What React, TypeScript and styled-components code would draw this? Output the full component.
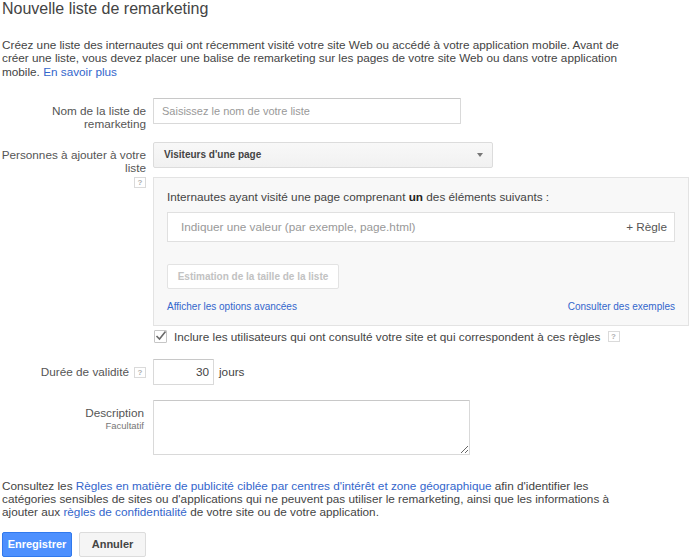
import React from 'react'
import styled, { createGlobalStyle } from 'styled-components'

const GlobalStyle = createGlobalStyle`
  body {
    margin: 0;
    background: #fff;
    font-family: 'Liberation Sans', Arial, sans-serif;
    color: #444;
  }
  * { box-sizing: border-box; }
`

// the screenshot's body text sits a little under 12px
const TEXT = '11.75px'

const App = () => {
  return (
    <Page>
      <GlobalStyle />
      <Title>Nouvelle liste de remarketing</Title>
      <Paragraph $top={20}>
        Créez une liste des internautes qui ont récemment visité votre site Web
        ou accédé à votre application mobile. Avant de créer une liste, vous
        devez placer une balise de remarketing sur les pages de votre site Web
        ou dans votre application mobile. <Link href="#">En savoir plus</Link>
      </Paragraph>

      <Row $top={20}>
        <Label>Nom de la liste de remarketing</Label>
        <div>
          <TextInput $width={308} placeholder="Saisissez le nom de votre liste" />
        </div>
      </Row>

      <Row $top={11}>
        <Label>
          Personnes à ajouter à votre liste
          <HelpLine>
            <Help>?</Help>
          </HelpLine>
        </Label>
        <div>
          <Select>
            Visiteurs d&apos;une page
            <Arrow />
          </Select>
          <Panel>
            <PanelHeading>
              Internautes ayant visité une page comprenant <b>un</b> des
              éléments suivants :
            </PanelHeading>
            <RuleBox>
              <RuleInput placeholder="Indiquer une valeur (par exemple, page.html)" />
              <RuleAdd>+ Règle</RuleAdd>
            </RuleBox>
            <EstimateButton disabled>Estimation de la taille de la liste</EstimateButton>
            <PanelLinks>
              <Link href="#">Afficher les options avancées</Link>
              <Link href="#">Consulter des exemples</Link>
            </PanelLinks>
          </Panel>
          <CheckRow>
            <CheckBox>
              <svg width="14" height="14" viewBox="0 0 14 14">
                <polyline
                  points="2.5,7 5.5,10 11.5,2.5"
                  fill="none"
                  stroke="#6a6a6a"
                  strokeWidth="1.6"
                />
              </svg>
            </CheckBox>
            Inclure les utilisateurs qui ont consulté votre site et qui
            correspondent à ces règles
            <Help $gap={7}>?</Help>
          </CheckRow>
        </div>
      </Row>

      <Row $top={15}>
        <Label>
          Durée de validité
          <Help $gap={5}>?</Help>
        </Label>
        <Duration>
          <TextInput $width={61} $alignRight defaultValue="30" />
          <span>jours</span>
        </Duration>
      </Row>

      <Row $top={15}>
        <Label $pad={2}>
          Description
          <SubLabel>Facultatif</SubLabel>
        </Label>
        <div>
          <TextArea />
        </div>
      </Row>

      <Paragraph $top={24}>
        Consultez les{' '}
        <Link href="#">
          Règles en matière de publicité ciblée par centres d&apos;intérêt et
          zone géographique
        </Link>{' '}
        afin d&apos;identifier les catégories sensibles de sites ou
        d&apos;applications qui ne peuvent pas utiliser le remarketing, ainsi
        que les informations à ajouter aux{' '}
        <Link href="#">règles de confidentialité</Link> de votre site ou de
        votre application.
      </Paragraph>

      <Actions>
        <Button $primary $width={70}>Enregistrer</Button>
        <Button $width={67}>Annuler</Button>
      </Actions>
    </Page>
  )
}

export default App

const Page = styled.div`
  width: 700px;
  height: 560px;
  overflow: hidden;
  padding-left: 2px;
`

const Title = styled.h1`
  margin: 0;
  font-size: 16px;
  line-height: 18px;
  font-weight: normal;
  color: #444;
`

const Paragraph = styled.p<{ $top: number }>`
  margin: ${p => p.$top}px 0 0;
  width: 635px;
  font-size: ${TEXT};
  line-height: 13.3px;
  color: #444;
`

const Link = styled.a`
  color: #3366cc;
  text-decoration: none;
`

const Row = styled.div<{ $top: number }>`
  display: grid;
  grid-template-columns: 144px 1fr;
  column-gap: 7px;
  align-items: start;
  margin-top: ${p => p.$top}px;
`

/* a few px of slack on the left so the longest label keeps to one line */
const Label = styled.div<{ $pad?: number }>`
  margin-left: -4px;
  text-align: right;
  padding-top: 6px;
  padding-right: ${p => p.$pad || 0}px;
  font-size: ${TEXT};
  line-height: 13.5px;
  color: #555;
`

const SubLabel = styled.div`
  font-size: 9.5px;
  line-height: 13px;
  color: #777;
`

const HelpLine = styled.div`
  margin-top: 1px;
  line-height: 11px;
`

const Help = styled.span<{ $gap?: number }>`
  display: inline-block;
  vertical-align: middle;
  margin-left: ${p => p.$gap || 0}px;
  width: 12px;
  height: 11px;
  border: 1px solid #dadada;
  font-size: 8px;
  line-height: 9px;
  text-align: center;
  color: #b0b0b0;
  font-weight: bold;
`

const TextInput = styled.input<{ $width: number; $alignRight?: boolean }>`
  width: ${p => p.$width}px;
  height: 26px;
  margin: 0;
  padding: 0 ${p => (p.$alignRight ? 4 : 8)}px 0 8px;
  border: 1px solid #d9d9d9;
  border-top-color: #c8c8c8;
  border-radius: 1px;
  font-family: inherit;
  font-size: ${p => (p.$alignRight ? TEXT : '11px')};
  color: #444;
  text-align: ${p => (p.$alignRight ? 'right' : 'left')};
  outline: none;

  &::placeholder {
    color: #999;
  }
`

const Select = styled.div`
  width: 340px;
  height: 26px;
  display: flex;
  align-items: center;
  justify-content: space-between;
  padding: 0 9px 0 10px;
  border: 1px solid #dcdcdc;
  border-radius: 2px;
  background: linear-gradient(#f8f8f8, #f1f1f1);
  font-size: 10px;
  font-weight: bold;
  color: #444;
`

const Arrow = styled.span`
  width: 0;
  height: 0;
  border-left: 3.5px solid transparent;
  border-right: 3.5px solid transparent;
  border-top: 4px solid #777;
`

const Panel = styled.div`
  margin-top: 9px;
  width: 536px;
  padding: 12px 13px 11px 13px;
  border: 1px solid #e3e3e3;
  background: #f8f8f8;
`

const PanelHeading = styled.div`
  font-size: ${TEXT};
  line-height: 14px;
  color: #444;

  b {
    color: #222;
  }
`

const RuleBox = styled.div`
  margin-top: 8px;
  height: 30px;
  display: flex;
  align-items: center;
  padding: 0 7px 0 13px;
  border: 1px solid #e0e0e0;
  background: #fff;
`

const RuleInput = styled.input`
  flex: 1;
  border: none;
  outline: none;
  padding: 0;
  font-family: inherit;
  font-size: ${TEXT};
  background: transparent;

  &::placeholder {
    color: #999;
  }
`

const RuleAdd = styled.span`
  font-size: ${TEXT};
  color: #555;
`

const EstimateButton = styled.button`
  display: block;
  margin-top: 22px;
  width: 172px;
  height: 25px;
  padding: 0;
  border: 1px solid #e3e3e3;
  border-radius: 2px;
  background: #fff;
  font-family: inherit;
  font-size: 10px;
  font-weight: bold;
  color: #c2c2c2;
`

const PanelLinks = styled.div`
  margin-top: 11px;
  display: flex;
  justify-content: space-between;
  font-size: 10px;
  line-height: 14px;
`

const CheckRow = styled.div`
  margin-top: 4px;
  display: flex;
  align-items: center;
  height: 14px;
  font-size: ${TEXT};
  color: #444;
`

const CheckBox = styled.span`
  position: relative;
  width: 13px;
  height: 13px;
  margin: 0 7px 0 1px;
  border: 1px solid #c6c6c6;
  background: #fff;
  border-radius: 1px;

  svg {
    position: absolute;
    left: -1px;
    top: -2px;
  }
`

const Duration = styled.div`
  display: flex;
  align-items: center;
  gap: 5px;
  font-size: ${TEXT};
  color: #444;
`

const TextArea = styled.textarea`
  display: block;
  width: 317px;
  height: 55px;
  margin: 0;
  border: 1px solid #d9d9d9;
  border-top-color: #c8c8c8;
  border-radius: 1px;
  outline: none;
  font-family: inherit;
`

const Actions = styled.div`
  margin-top: 13px;
  display: flex;
  gap: 7px;
`

const Button = styled.button<{ $primary?: boolean; $width: number }>`
  width: ${p => p.$width}px;
  height: 25px;
  padding: 0;
  border: 1px solid ${p => (p.$primary ? '#3079ed' : '#dcdcdc')};
  border-radius: 2px;
  background: ${p => (p.$primary ? '#4d90fe' : '#f5f5f5')};
  color: ${p => (p.$primary ? '#fff' : '#444')};
  font-family: inherit;
  font-size: 11px;
  font-weight: bold;
`
